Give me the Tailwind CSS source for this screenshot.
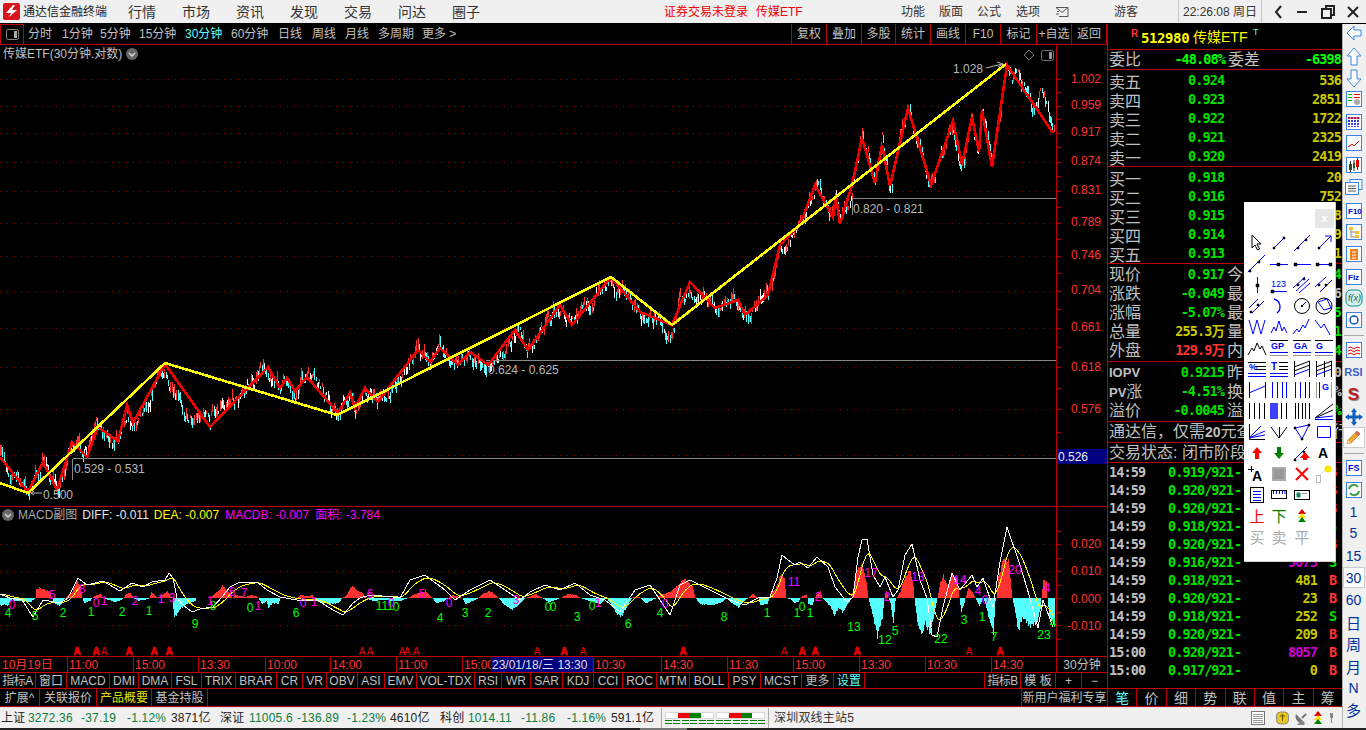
<!DOCTYPE html>
<html lang="zh">
<head>
<meta charset="UTF-8">
<title>通达信金融终端</title>
<script src="https://cdn.jsdelivr.net/npm/@tailwindcss/browser@4"></script>
</head>
<body class="w-[1366px] h-[730px] overflow-hidden bg-black flex flex-col text-[12px] leading-none text-[#c0c0c0] font-['Liberation_Sans','Noto_Sans_CJK_SC',sans-serif]">

<!-- title bar -->
<header class="h-[23px] shrink-0 bg-[#f0f0f0] flex items-center text-[#333] relative">
  <svg class="ml-[3px]" width="17" height="17" viewBox="0 0 17 17"><rect width="17" height="17" rx="2" fill="#d8141c"/><path d="M10 2 3 10h5l-2 4 8-7H9l3-5z" fill="#fff"/></svg>
  <span class="ml-[3px] w-[84px] text-[12px] text-[#222]">通达信金融终端</span>
  <nav class="ml-[21px] flex text-[14px] text-[#333]">
    <span class="w-[54px]">行情</span><span class="w-[54px]">市场</span><span class="w-[54px]">资讯</span><span class="w-[54px]">发现</span><span class="w-[54px]">交易</span><span class="w-[54px]">问达</span><span class="w-[54px]">圈子</span>
  </nav>
  <span class="ml-[158px] w-[92px] text-[#f00000]">证券交易未登录</span>
  <span class="w-[104px] text-[#f00000]">传媒ETF</span>
  <div class="ml-[41px] flex text-[#333]"><span class="w-[38px]">功能</span><span class="w-[38px]">版面</span><span class="w-[39px]">公式</span><span class="w-[31px]">选项</span></div>
  <svg class="ml-[8px]" width="16" height="12" viewBox="0 0 16 12" fill="none" stroke="#555"><path d="M1 1.500h12v9H4M1 1.500l6 5 6-5"/><path d="M1 8h3M2 5.500h2"/></svg>
  <span class="ml-[43px] w-[64px] text-[#333]">游客</span>
  <div class="h-full w-[84px] border-x border-[#c8c8c8] flex items-center justify-center text-[#333] whitespace-nowrap">22:26:08 周日</div>
  <div class="flex items-center h-full">
    <svg class="ml-[11px]" width="12" height="14" viewBox="0 0 12 14" fill="none" stroke="#222" stroke-width="2"><path d="M8 1 3 7l5 6"/></svg>
    <svg class="ml-[11px]" width="12" height="14" viewBox="0 0 12 14"><rect x="1" y="6" width="10" height="2" fill="#222"/></svg>
    <svg class="ml-[13px]" width="14" height="14" viewBox="0 0 14 14" fill="none" stroke="#222" stroke-width="2"><path d="M5 3V1h8v9h-3M1 4h9v9H1z"/></svg>
    <svg class="ml-[11px]" width="14" height="14" viewBox="0 0 14 14" fill="none" stroke="#222" stroke-width="2"><path d="m2 2 10 10M12 2 2 12"/></svg>
  </div>
</header>
<div class="h-px shrink-0 bg-black"></div>

<div class="flex h-[704px] shrink-0">
  <div class="w-[1342px] shrink-0 flex flex-col">
    <div class="flex h-[682px] shrink-0">
      <!-- chart column -->
      <div class="w-[1107px] shrink-0 flex flex-col">
        <!-- period toolbar -->
        <div class="h-[21px] shrink-0 border-b border-[#c00000] flex items-center">
          <div class="w-[24px] h-full border-x border-t border-[#c00000] flex items-center justify-center">
            <svg width="13" height="11" viewBox="0 0 13 11"><rect x=".5" y=".5" width="12" height="10" rx="2" fill="none" stroke="#888"/><rect x="8" y="2" width="3" height="7" fill="#aaa"/></svg>
          </div>
          <div class="ml-[4px] flex whitespace-nowrap">
            <span class="w-[34px]">分时</span><span class="w-[38px]">1分钟</span><span class="w-[39px]">5分钟</span><span class="w-[46px]">15分钟</span><span class="w-[46px] text-[#5fffff]">30分钟</span><span class="w-[47px]">60分钟</span><span class="w-[34px]">日线</span><span class="w-[33px]">周线</span><span class="w-[33px]">月线</span><span class="w-[44px]">多周期</span><span>更多 &gt;</span>
          </div>
          <div class="ml-auto flex h-full border-r border-[#c00000]">
            <span class="w-[35px] border-l border-[#c00000] flex items-center justify-center">复权</span>
            <span class="w-[35px] border-l border-[#c00000] flex items-center justify-center">叠加</span>
            <span class="w-[34px] border-l border-[#c00000] flex items-center justify-center">多股</span>
            <span class="w-[35px] border-l border-[#c00000] flex items-center justify-center">统计</span>
            <span class="w-[35px] border-l border-[#c00000] flex items-center justify-center">画线</span>
            <span class="w-[35px] border-l border-[#c00000] flex items-center justify-center">F10</span>
            <span class="w-[36px] border-l border-[#c00000] flex items-center justify-center">标记</span>
            <span class="w-[35px] border-l border-[#c00000] flex items-center justify-center whitespace-nowrap">+自选</span>
            <span class="w-[35px] border-l border-[#c00000] flex items-center justify-center">返回</span>
          </div>
        </div>

        <!-- main pane -->
        <div class="h-[461px] shrink-0 flex">
          <div class="w-[1056px] shrink-0 relative">
            <svg id="main" class="absolute inset-0" width="1056" height="461" viewBox="0 45 1056 461">
              <g id="mainGrid" shape-rendering="crispEdges"></g>
              <g id="bars" shape-rendering="crispEdges"></g>
              <g shape-rendering="crispEdges" stroke="#888" fill="none">
                <path d="M852.5 198.5H1056M852.500 198.500V215"/>
                <path d="M486 360.5H1056"/>
                <path d="M72.5 458.5H1056M72.500 458.500V480"/>
              </g>
              <polyline id="zigRed" fill="none" stroke="#f00000" stroke-width="2.6" shape-rendering="crispEdges"/>
              <polyline id="zigYellow" fill="none" stroke="#ffff00" stroke-width="2.6" shape-rendering="crispEdges"/>
              <g font-size="12" fill="#b8b8b8" font-family="Liberation Sans">
                <text x="853" y="213">0.820 - 0.821</text>
                <text x="488" y="374">0.624 - 0.625</text>
                <text x="74" y="473">0.529 - 0.531</text>
                <text x="43" y="499">0.500</text>
                <text x="953" y="73">1.028</text>
              </g>
              <path d="M31 493h11M31 493l3-2M31 493l3 2M986 68l16-4M997 62l6 2-5 3" stroke="#b8b8b8" fill="none"/>
            </svg>
            <div class="absolute left-[3px] top-[3px] flex items-center gap-[4px]">
              <span class="text-[#c0c0c0]">传媒ETF(30分钟.对数)</span>
              <svg width="12" height="12" viewBox="0 0 12 12"><circle cx="6" cy="6" r="6" fill="#666"/><path d="m3 5 3 3 3-3" fill="none" stroke="#ddd" stroke-width="1.400"/></svg>
            </div>
            <div class="absolute right-[2px] top-[4px] flex items-center gap-[6px]">
              <svg width="12" height="12" viewBox="0 0 12 12"><path d="M6 1 11 6 6 11 1 6z" fill="none" stroke="#777"/></svg>
              <svg width="13" height="11" viewBox="0 0 13 11"><rect x=".5" y=".5" width="12" height="10" rx="2" fill="none" stroke="#777"/><rect x="8" y="2" width="3" height="7" fill="#999"/></svg>
            </div>
          </div>
          <div class="w-[51px] border-l border-[#c00000] relative">
            <svg class="absolute inset-0" width="50" height="461" viewBox="1057 45 50 461" id="axisMain"></svg>
            <div class="absolute left-0 top-[404px] w-[50px] h-[15px] bg-[#000080] text-[#f0f0f0] flex items-center pl-[1px]">0.526</div>
          </div>
        </div>

        <!-- macd pane -->
        <div class="h-[150px] shrink-0 border-t border-[#c00000] flex">
          <div class="w-[1056px] shrink-0 relative">
            <svg id="macd" class="absolute inset-0" width="1056" height="149" viewBox="0 507 1056 149">
              <g id="macdGrid" shape-rendering="crispEdges"></g>
              <g id="hist" shape-rendering="crispEdges"></g>
              <polyline id="dea" fill="none" stroke="#ffff00" shape-rendering="crispEdges"/>
              <polyline id="diff" fill="none" stroke="#ffffff" shape-rendering="crispEdges"/>
              <g id="macdLabels" font-size="12" font-family="Liberation Sans"></g>
              <g id="marks" font-size="10" font-family="Liberation Sans" fill="#f00000"></g>
            </svg>
            <div class="absolute left-[2px] top-[2px] flex items-center whitespace-nowrap">
              <svg width="12" height="12" viewBox="0 0 12 12"><circle cx="6" cy="6" r="6" fill="#666"/><path d="m3 5 3 3 3-3" fill="none" stroke="#ddd" stroke-width="1.400"/></svg>
              <span class="ml-[4px] text-[#a8a8a8]">MACD副图</span>
              <span class="ml-[5px] text-[#e8e8e8]">DIFF: -0.011</span>
              <span class="ml-[5px] text-[#ffff00]">DEA: -0.007</span>
              <span class="ml-[6px] text-[#ff00ff]">MACDB: -0.007</span>
              <span class="ml-[6px] text-[#ff00ff]">面积: -3.784</span>
            </div>
          </div>
          <div class="w-[51px] border-l border-[#c00000] relative">
            <svg class="absolute inset-0" width="50" height="149" viewBox="1057 507 50 149" id="axisMacd"></svg>
          </div>
        </div>

        <!-- time axis -->
        <div class="h-[16px] shrink-0 border-t border-[#c00000] flex text-[#ff3232] whitespace-nowrap">
          <span class="w-[67px] pl-[2px] flex items-center">10月19日</span>
          <span class="w-[66px] border-l border-[#c00000] flex items-center pl-px">11:00</span>
          <span class="w-[65px] border-l border-[#c00000] flex items-center pl-px">15:00</span>
          <span class="w-[67px] border-l border-[#c00000] flex items-center pl-px">13:30</span>
          <span class="w-[65px] border-l border-[#c00000] flex items-center pl-px">10:00</span>
          <span class="w-[66px] border-l border-[#c00000] flex items-center pl-px">14:00</span>
          <span class="w-[66px] border-l border-[#c00000] flex items-center pl-px">11:00</span>
          <span class="w-[29px] border-l border-[#c00000] flex items-center pl-px overflow-hidden">15:00</span>
          <span class="w-[103px] bg-[#000080] text-[#e0e0e0] border-r border-[#c00000] flex items-center pl-px">23/01/18/三 13:30</span>
          <span class="w-[67px] flex items-center pl-px">10:30</span>
          <span class="w-[66px] border-l border-[#c00000] flex items-center pl-px">14:30</span>
          <span class="w-[66px] border-l border-[#c00000] flex items-center pl-px">11:30</span>
          <span class="w-[66px] border-l border-[#c00000] flex items-center pl-px">15:00</span>
          <span class="w-[66px] border-l border-[#c00000] flex items-center pl-px">13:30</span>
          <span class="w-[66px] border-l border-[#c00000] flex items-center pl-px">10:30</span>
          <span class="w-[65px] border-l border-[#c00000] flex items-center pl-px">14:30</span>
          <span class="flex-1 border-l border-[#c00000] flex items-center justify-center text-[#c0c0c0]">30分钟</span>
        </div>

        <!-- indicator tabs -->
        <div class="h-[16px] shrink-0 border-t border-[#c00000] flex whitespace-nowrap text-[#c0c0c0]">
          <span class="w-[36px] border-r border-[#c00000] flex items-center justify-center tracking-[-0.5px]">指标A</span>
          <span class="w-[31px] border-r border-[#c00000] flex items-center justify-center">窗口</span>
          <span class="w-[43px] border-r border-[#c00000] flex items-center justify-center">MACD</span>
          <span class="w-[29px] border-r border-[#c00000] flex items-center justify-center">DMI</span>
          <span class="w-[33px] border-r border-[#c00000] flex items-center justify-center">DMA</span>
          <span class="w-[30px] border-r border-[#c00000] flex items-center justify-center">FSL</span>
          <span class="w-[34px] border-r border-[#c00000] flex items-center justify-center">TRIX</span>
          <span class="w-[41px] border-r border-[#c00000] flex items-center justify-center">BRAR</span>
          <span class="w-[26px] border-r border-[#c00000] flex items-center justify-center">CR</span>
          <span class="w-[24px] border-r border-[#c00000] flex items-center justify-center">VR</span>
          <span class="w-[31px] border-r border-[#c00000] flex items-center justify-center">OBV</span>
          <span class="w-[27px] border-r border-[#c00000] flex items-center justify-center">ASI</span>
          <span class="w-[32px] border-r border-[#c00000] flex items-center justify-center">EMV</span>
          <span class="w-[58px] border-r border-[#c00000] flex items-center justify-center">VOL-TDX</span>
          <span class="w-[27px] border-r border-[#c00000] flex items-center justify-center">RSI</span>
          <span class="w-[29px] border-r border-[#c00000] flex items-center justify-center">WR</span>
          <span class="w-[32px] border-r border-[#c00000] flex items-center justify-center">SAR</span>
          <span class="w-[31px] border-r border-[#c00000] flex items-center justify-center">KDJ</span>
          <span class="w-[29px] border-r border-[#c00000] flex items-center justify-center">CCI</span>
          <span class="w-[34px] border-r border-[#c00000] flex items-center justify-center">ROC</span>
          <span class="w-[33px] border-r border-[#c00000] flex items-center justify-center">MTM</span>
          <span class="w-[39px] border-r border-[#c00000] flex items-center justify-center">BOLL</span>
          <span class="w-[32px] border-r border-[#c00000] flex items-center justify-center">PSY</span>
          <span class="w-[41px] border-r border-[#c00000] flex items-center justify-center">MCST</span>
          <span class="w-[32px] border-r border-[#c00000] flex items-center justify-center">更多</span>
          <span class="w-[31px] border-r border-[#c00000] flex items-center justify-center text-[#5fffff]">设置</span>
          <span class="w-[120px] border-r border-[#c00000]"></span>
          <span class="w-[36px] border-r border-[#c00000] flex items-center justify-center tracking-[-0.5px]">指标B</span>
          <span class="w-[35px] border-r border-[#c00000] flex items-center justify-center">模 板</span>
          <span class="w-[26px] border-r border-[#c00000] flex items-center justify-center">+</span>
          <span class="flex-1 flex items-center justify-center">−</span>
        </div>

        <!-- extension tabs -->
        <div class="h-[18px] shrink-0 border-t border-[#c00000] flex whitespace-nowrap">
          <span class="w-[40px] border-r border-[#c00000] flex items-center justify-center">扩展^</span>
          <span class="w-[57px] border-r border-[#c00000] flex items-center justify-center">关联报价</span>
          <span class="w-[55px] border-r border-[#c00000] flex items-center justify-center text-[#e0e000]">产品概要</span>
          <span class="w-[56px] border-r border-[#c00000] flex items-center justify-center">基金持股</span>
          <span class="ml-auto w-[86px] border-l border-[#c00000] flex items-center justify-center">新用户福利专享</span>
        </div>
      </div>

      <!-- quote panel -->
      <div class="w-[235px] shrink-0 border-l border-[#c00000] flex flex-col relative text-[16px]">
        <div class="h-[26px] shrink-0 border-b border-[#c00000] flex items-center relative">
          <span class="absolute left-[23px] top-[5px] text-[10px] font-bold text-[#ff3232]">R</span>
          <span class="absolute left-[33px] top-[7px] text-[14px] font-bold text-[#ffff00] font-['DejaVu_Sans_Mono','Noto_Sans_CJK_SC',monospace] tracking-[-0.4px]">512980</span>
          <span class="absolute left-[85px] top-[6px] text-[14px] text-[#ffff00] whitespace-nowrap">传媒ETF</span>
          <span class="absolute left-[145px] top-[4px] text-[9px] text-[#5fffff]">T</span>
        </div>
        <div class="h-[20px] shrink-0 border-b border-[#c00000] flex items-center pl-[1px] whitespace-nowrap">
          <span class="w-[32px] shrink-0">委比</span>
          <span class="w-[84px] shrink-0 text-right text-[#00ff00] font-bold font-['DejaVu_Sans_Mono',monospace] text-[13.5px] tracking-[-0.9px]">-48.08%</span>
          <span class="ml-[3px] w-[32px] shrink-0">委差</span>
          <span class="ml-auto pr-[1px] text-right text-[#00ff00] font-bold font-['DejaVu_Sans_Mono',monospace] text-[13.5px] tracking-[-0.9px]">-6398</span>
        </div>

        <div class="h-[97px] shrink-0 border-b border-[#c00000] pt-[1px] font-bold [&>div]:h-[19px] [&>div]:flex [&>div]:items-center [&_b]:font-normal [&_b]:w-[80px] [&_b]:pl-[1px] [&_i]:not-italic [&_i]:w-[35px] [&_i]:text-[#00e000] [&_u]:no-underline [&_u]:ml-auto [&_u]:pr-[1px] [&_u]:text-[#c8c800] font-['DejaVu_Sans_Mono','Noto_Sans_CJK_SC',monospace] text-[13.5px] tracking-[-0.9px]">
          <div><b class="text-[16px] tracking-normal font-['Noto_Sans_CJK_SC']">卖五</b><i>0.924</i><u>536</u></div>
          <div><b class="text-[16px] tracking-normal font-['Noto_Sans_CJK_SC']">卖四</b><i>0.923</i><u>2851</u></div>
          <div><b class="text-[16px] tracking-normal font-['Noto_Sans_CJK_SC']">卖三</b><i>0.922</i><u>1722</u></div>
          <div><b class="text-[16px] tracking-normal font-['Noto_Sans_CJK_SC']">卖二</b><i>0.921</i><u>2325</u></div>
          <div><b class="text-[16px] tracking-normal font-['Noto_Sans_CJK_SC']">卖一</b><i>0.920</i><u>2419</u></div>
        </div>
        <div class="h-[97px] shrink-0 border-b border-[#c00000] pt-[1px] font-bold [&>div]:h-[19px] [&>div]:flex [&>div]:items-center [&_b]:font-normal [&_b]:w-[80px] [&_b]:pl-[1px] [&_i]:not-italic [&_i]:w-[35px] [&_i]:text-[#00e000] [&_u]:no-underline [&_u]:ml-auto [&_u]:pr-[1px] [&_u]:text-[#c8c800] font-['DejaVu_Sans_Mono','Noto_Sans_CJK_SC',monospace] text-[13.5px] tracking-[-0.9px]">
          <div><b class="text-[16px] tracking-normal font-['Noto_Sans_CJK_SC']">买一</b><i>0.918</i><u>20</u></div>
          <div><b class="text-[16px] tracking-normal font-['Noto_Sans_CJK_SC']">买二</b><i>0.916</i><u>752</u></div>
          <div><b class="text-[16px] tracking-normal font-['Noto_Sans_CJK_SC']">买三</b><i>0.915</i><u>1238</u></div>
          <div><b class="text-[16px] tracking-normal font-['Noto_Sans_CJK_SC']">买四</b><i>0.914</i><u>1349</u></div>
          <div><b class="text-[16px] tracking-normal font-['Noto_Sans_CJK_SC']">买五</b><i>0.913</i><u>2101</u></div>
        </div>

        <div class="h-[98px] shrink-0 border-b border-[#c00000] pt-[1px] [&>div]:h-[19px] [&>div]:flex [&>div]:items-center [&_span]:w-[33px] [&_span]:pl-px [&_i]:not-italic [&_i]:font-bold [&_i]:w-[83px] [&_i]:text-right [&_i]:text-[13.5px] [&_i]:tracking-[-0.9px] [&_i]:font-['DejaVu_Sans_Mono','Noto_Sans_CJK_SC',monospace] [&_b]:font-normal [&_b]:ml-[3px] [&_u]:no-underline [&_u]:ml-auto [&_u]:font-bold [&_u]:text-[13.5px] [&_u]:tracking-[-0.9px] [&_u]:pr-px [&_u]:font-['DejaVu_Sans_Mono',monospace]">
          <div><span>现价</span><i class="text-[#00e000]">0.917</i><b>今开</b><u class="text-[#00e000]">0.964</u></div>
          <div><span>涨跌</span><i class="text-[#00e000]">-0.049</i><b>最高</b><u class="text-[#c0c0c0]">0.966</u></div>
          <div><span>涨幅</span><i class="text-[#00e000]">-5.07%</i><b>最低</b><u class="text-[#00e000]">0.915</u></div>
          <div><span>总量</span><i class="text-[#c8c800]">255.3万</i><b>量比</b><u class="text-[#00e000]">1.21</u></div>
          <div><span>外盘</span><i class="text-[#ff3232]">129.9万</i><b>内盘</b><u class="text-[#00e000]">125.4</u></div>
        </div>
        <div class="h-[60px] shrink-0 border-b border-[#c00000] pt-px [&>div]:h-[19px] [&>div]:flex [&>div]:items-center [&>div>span]:w-[33px] [&>div>span]:pl-px [&_i]:not-italic [&_i]:font-bold [&_i]:w-[83px] [&_i]:text-right [&_i]:text-[13.5px] [&_i]:tracking-[-0.9px] [&_i]:text-[#00e000] [&_i]:font-['DejaVu_Sans_Mono',monospace] [&_b]:font-normal [&_b]:ml-[3px] [&_u]:no-underline [&_u]:ml-auto [&_u]:font-bold [&_u]:text-[13.5px] [&_u]:tracking-[-0.9px] [&_u]:pr-px [&_u]:font-['DejaVu_Sans_Mono',monospace]">
          <div><span class="text-[13px] font-bold whitespace-nowrap">IOPV</span><i>0.9215</i><b>昨净</b><u>0.960</u></div>
          <div><span class="whitespace-nowrap"><strong class="text-[13px]">PV</strong>涨</span><i>-4.51%</i><b>换手</b><u class="text-[#c0c0c0]">3.12%</u></div>
          <div><span>溢价</span><i>-0.0045</i><b>溢率</b><u class="text-[#00e000]">-0.49%</u></div>
        </div>
        <div class="h-[21px] shrink-0 border-b border-[#c00000] flex items-center pl-[1px] whitespace-nowrap overflow-hidden">通达信，仅需<strong class="text-[14px]">20</strong>元查看港股实时行情</div>
        <div class="h-[20px] shrink-0 border-b border-[#c00000] flex items-center pl-[1px] whitespace-nowrap overflow-hidden">交易状态: 闭市阶段</div>

        <div class="flex-1 pt-px font-bold text-[13.5px] tracking-[-0.9px] font-['DejaVu_Sans_Mono',monospace] [&>div]:h-[18px] [&>div]:flex [&>div]:items-center [&>div]:pl-px [&_i]:not-italic [&_i]:w-[59px] [&_b]:w-[66px] [&_b]:text-[#00e000] [&_s]:no-underline [&_s]:w-[10px] [&_s]:text-[#00e000] [&_u]:no-underline [&_u]:w-[73px] [&_u]:text-right [&_em]:not-italic [&_em]:ml-[12px]">
          <div><i>14:59</i><b>0.919/921</b><s>-</s><u class="text-[#c8c800]">312</u><em class="text-[#ff3232]">B</em></div>
          <div><i>14:59</i><b>0.920/921</b><s>-</s><u class="text-[#c8c800]">95</u><em class="text-[#ff3232]">B</em></div>
          <div><i>14:59</i><b>0.920/921</b><s>-</s><u class="text-[#c8c800]">130</u><em class="text-[#ff3232]">B</em></div>
          <div><i>14:59</i><b>0.918/921</b><s>-</s><u class="text-[#c8c800]">88</u><em class="text-[#00e000]">S</em></div>
          <div><i>14:59</i><b>0.920/921</b><s>-</s><u class="text-[#c8c800]">41</u><em class="text-[#ff3232]">B</em></div>
          <div><i>14:59</i><b>0.916/921</b><s>-</s><u class="text-[#d000d0]">5075</u><em class="text-[#00e000]">S</em></div>
          <div><i>14:59</i><b>0.918/921</b><s>-</s><u class="text-[#c8c800]">481</u><em class="text-[#ff3232]">B</em></div>
          <div><i>14:59</i><b>0.920/921</b><s>-</s><u class="text-[#c8c800]">23</u><em class="text-[#ff3232]">B</em></div>
          <div><i>14:59</i><b>0.918/921</b><s>-</s><u class="text-[#c8c800]">252</u><em class="text-[#00e000]">S</em></div>
          <div><i>14:59</i><b>0.920/921</b><s>-</s><u class="text-[#c8c800]">209</u><em class="text-[#ff3232]">B</em></div>
          <div><i>15:00</i><b>0.920/921</b><s>-</s><u class="text-[#d000d0]">8057</u><em class="text-[#ff3232]">B</em></div>
          <div><i>15:00</i><b>0.917/921</b><s>-</s><u class="text-[#c8c800]">0</u><em class="text-[#ff3232]">B</em></div>
        </div>

        <div class="h-[18px] shrink-0 border-t border-[#c00000] flex text-[14px] [&>span]:flex-1 [&>span]:flex [&>span]:items-center [&>span]:justify-center [&>span]:border-r [&>span]:border-[#c00000]">
          <span class="text-[#5fffff]">笔</span><span>价</span><span>细</span><span>势</span><span>联</span><span>值</span><span>主</span><span class="!border-r-0">筹</span>
        </div>

        <!-- drawing tools palette -->
        <div class="absolute left-[136px] top-[178px] w-[92px] h-[360px] bg-white border-r border-b border-[#d0d0d0] shadow-sm z-10">
          <div class="flex justify-end pt-[7px] pr-[1px]"><span class="w-[19px] h-[19px] bg-[#e6e6e6] text-white text-[11px] font-bold flex items-center justify-center">x</span></div>
          <div class="mt-[5px] pl-[3px] grid grid-cols-[22px_23px_22px_22px] auto-rows-[21px] [&>svg]:w-[20px] [&>svg]:h-[20px] [&>svg]:fill-none [&>svg]:stroke-[#0000ff]">
            <svg viewBox="0 0 20 20"><path d="M5 2v13l3-3 2.500 5 2-1-2.500-5h4z" fill="#fff" stroke="#000"/></svg>
            <svg viewBox="0 0 20 20"><path d="M5 15 15 5"/><path d="M4 14h2v2H4zM14 4h2v2h-2z" fill="#000" stroke="#000" stroke-width=".5"/></svg>
            <svg viewBox="0 0 20 20"><path d="M2 18 18 2"/><path d="M5 14h2v2H5zM13 6h2v2h-2z" fill="#000" stroke="#000" stroke-width=".5"/></svg>
            <svg viewBox="0 0 20 20"><path d="M5 15 17 3M11 3h6v6"/><path d="M4 14h2v2H4z" fill="#000" stroke="#000" stroke-width=".5"/></svg>

            <svg viewBox="0 0 20 20"><path d="M1 18 18 1"/><path d="M2 16h2v2H2zM11 7h2v2h-2z" fill="#000" stroke="#000" stroke-width=".5"/></svg>
            <svg viewBox="0 0 20 20"><path d="M1 10.500h18"/><path d="M8 9h3v3H8z" fill="#000" stroke="#000" stroke-width=".5"/></svg>
            <svg viewBox="0 0 20 20"><path d="M2 10.500h17"/><path d="M2 9h3v3H2z" fill="#000" stroke="#000" stroke-width=".5"/></svg>
            <svg viewBox="0 0 20 20"><path d="M2 10.500h16"/><path d="M2 9h3v3H2zM15 9h3v3h-3z" fill="#000" stroke="#000" stroke-width=".5"/></svg>

            <svg viewBox="0 0 20 20"><path d="M10.500 2v16"/><path d="M9 9h3v3H9z" fill="#000" stroke="#000" stroke-width=".5"/></svg>
            <svg viewBox="0 0 20 20"><text x="2" y="12" font-size="9" fill="#0000ff" stroke="none">123</text><path d="M3 16.500h15"/><path d="M2 15h3v3H2z" fill="#000" stroke="#000" stroke-width=".5"/></svg>
            <svg viewBox="0 0 20 20"><path d="M1 13 13 2M4 16 17 4M7 18 18 8"/><path d="M5 9h2v2H5zM11 3h2v2h-2z" fill="#000" stroke="#000" stroke-width=".5"/></svg>
            <svg viewBox="0 0 20 20"><path d="M1 12 12 2M6 17 18 5"/><path d="M4 9h2v2H4zM11 9h2v2h-2z" fill="#000" stroke="#000" stroke-width=".5"/></svg>

            <svg viewBox="0 0 20 20"><path d="M2 12 11 3M5 17 17 5"/><path d="M3 15h2v2H3zM10 8h2v2h-2z" fill="#000" stroke="#000" stroke-width=".5"/></svg>
            <svg viewBox="0 0 20 20"><path d="M5 3a8 8 0 0 1 3 14" stroke-width="1.300"/></svg>
            <svg viewBox="0 0 20 20"><circle cx="10" cy="10" r="7.500" stroke="#000"/><path d="M10 10 14 6"/><path d="M9 9h2v2H9z" fill="#000" stroke="none"/></svg>
            <svg viewBox="0 0 20 20"><circle cx="10" cy="10" r="8" stroke="#000"/><path d="m4 6 9-3 4 9-7 2z"/></svg>

            <svg viewBox="0 0 20 20"><path d="M2 3l4 14 4-14 4 14 4-14"/></svg>
            <svg viewBox="0 0 20 20"><path d="M2 16l3-6 2 4 3-10 3 10 2-4 3 6"/></svg>
            <svg viewBox="0 0 20 20"><path d="M1 17l4-5 2 3 4-7 2 3 4-9"/></svg>
            <svg viewBox="0 0 20 20"><path d="M1 3l6 8 3-4 6 11"/></svg>

            <svg viewBox="0 0 20 20" class="!stroke-[#000]"><path d="M1 17l4-7 2 3 3-8 3 6 2-3 4 9"/></svg>
            <svg viewBox="0 0 20 20"><path d="M1 2.500h18" stroke="#000"/><text x="2" y="11" font-size="9" font-weight="bold" fill="#0000ff" stroke="none">GP</text><path d="M1 14.500h18"/><path d="M1 17.500h18" stroke="#999"/></svg>
            <svg viewBox="0 0 20 20"><path d="M1 2.500h18" stroke="#000"/><text x="2" y="11" font-size="9" font-weight="bold" fill="#0000ff" stroke="none">GA</text><path d="M1 14.500h18"/><path d="M1 17.500h18" stroke="#999"/></svg>
            <svg viewBox="0 0 20 20"><path d="M1 2.500h18" stroke="#000"/><text x="2" y="11" font-size="9" font-weight="bold" fill="#0000ff" stroke="none">G</text><path d="M1 14.500h18"/><path d="M1 17.500h18" stroke="#999"/></svg>

            <svg viewBox="0 0 20 20"><path d="M1 3.500h18M8 7.500h11M8 10.500h11" stroke="#000"/><text x="2" y="11" font-size="9" font-weight="bold" fill="#0000ff" stroke="none">%</text><path d="M1 14.500h18M1 17.500h18"/></svg>
            <svg viewBox="0 0 20 20"><path d="M10 3.500h9M10 7.500h9M10 10.500h9" stroke="#000"/><text x="2" y="11" font-size="10" font-weight="bold" fill="#0000ff" stroke="none">T</text><path d="M1 14.500h18M1 17.500h18"/></svg>
            <svg viewBox="0 0 20 20"><path d="M2.500 2v16M17.500 2v16" stroke="#000"/><path d="M2 8 18 2M2 12 18 6" stroke="#000"/><path d="M2 16 18 10"/></svg>
            <svg viewBox="0 0 20 20"><path d="M2.500 2v16M10.500 2v16M17.500 2v16" stroke="#000"/><path d="M2 8 18 2M2 12 18 6" stroke="#000"/><path d="M2 16 18 10"/></svg>

            <svg viewBox="0 0 20 20"><path d="M2.500 2v16M18.500 2v16" stroke="#000"/><path d="M2 13 18 6"/></svg>
            <svg viewBox="0 0 20 20"><path d="M3.500 2v16M8.500 2v16M13.500 2v16M17.500 2v16"/></svg>
            <svg viewBox="0 0 20 20"><path d="M3.500 2v16M8.500 2v16M17.500 2v16"/><path d="M13.500 2v16" stroke="#000"/></svg>
            <svg viewBox="0 0 20 20"><path d="M2.500 2v16M17.500 2v16" stroke="#999"/><path d="M5.500 2v16"/><text x="8" y="10" font-size="9" font-weight="bold" fill="#0000ff" stroke="none">G</text></svg>

            <svg viewBox="0 0 20 20" class="!stroke-[#000]"><path d="M2.500 2v16M7.500 2v16M12.500 2v16M17.500 2v16"/></svg>
            <svg viewBox="0 0 20 20"><path d="M2 2v16M4 2v16M6 2v16M8 2v16" stroke-width="1.500"/><path d="M12.500 2v16M17.500 2v16" stroke="#000"/></svg>
            <svg viewBox="0 0 20 20" class="!stroke-[#000]"><path d="M3.500 2v16M6.500 2v16M10.500 2v16"/><path d="M13.500 2v16" stroke="#00f"/><path d="M17.500 2v16"/></svg>
            <svg viewBox="0 0 20 20"><path d="M1 17 19 3M1 17 19 9" stroke="#000"/><path d="M1 17 19 15M1 18.500h18"/></svg>

            <svg viewBox="0 0 20 20"><path d="M2.500 2v15.500H18" stroke="#000"/><path d="M2 16 14 4M2 16 18 9M2 16l16-3"/></svg>
            <svg viewBox="0 0 20 20" class="!stroke-[#000]"><path d="M2 5l8 11 8-11M10.500 5v11"/></svg>
            <svg viewBox="0 0 20 20"><path d="M3 6 17 3 10 17z"/><path d="M2 5h2v2H2zM16 2h2v2h-2zM9 16h2v2H9z" fill="#000" stroke="#000" stroke-width=".5"/></svg>
            <svg viewBox="0 0 20 20"><path d="M3.500 4.500h13v11h-13z"/></svg>

            <svg viewBox="0 0 20 20"><path d="M10 4 5 10h3v6h4v-6h3z" fill="#ff0000" stroke="none"/></svg>
            <svg viewBox="0 0 20 20"><path d="M10 16 5 10h3V4h4v6h3z" fill="#008000" stroke="none"/></svg>
            <svg viewBox="0 0 20 20"><path d="M2 17 15 4"/><path d="M2 16h2v2H2zM11 8h2v2h-2z" fill="#000" stroke="#000" stroke-width=".5"/><path d="M13 9 8 15h3v2h4v-2h3z" fill="#ff0000" stroke="none"/></svg>
            <svg viewBox="0 0 20 20"><text x="4" y="15" font-size="14" font-weight="bold" fill="#000" stroke="none">A</text></svg>

            <svg viewBox="0 0 20 20"><path d="M1 5.500h6M4.500 2v6" stroke="#000"/><text x="5" y="17" font-size="14" font-weight="bold" fill="#000" stroke="none">A</text></svg>
            <svg viewBox="0 0 20 20"><rect x="4" y="4" width="12" height="12" fill="#999" stroke="#aaa" stroke-width="2"/></svg>
            <svg viewBox="0 0 20 20"><path d="m4 4 12 12M16 4 4 16" stroke="#ff0000" stroke-width="2"/></svg>
            <svg viewBox="0 0 20 20"><rect x="2.500" y="11.500" width="4" height="7" stroke="#bbb"/><path d="m6 11 6-6" stroke="#ddd"/><circle cx="14" cy="5" r="3.500" fill="#ffe600" stroke="none"/></svg>

            <svg viewBox="0 0 20 20"><rect x="3.500" y="2.500" width="13" height="15" stroke="#000"/><path d="M6 6.500h8M6 9.500h8M6 12.500h8M6 15.500h8"/></svg>
            <svg viewBox="0 0 20 20"><rect x="2.500" y="5.500" width="15" height="8" stroke="#000"/><path d="M4.500 6v3M7.500 6v3M10.500 6v3M13.500 6v3M16 6v3"/></svg>
            <svg viewBox="0 0 20 20"><rect x="2.500" y="5.500" width="15" height="9" stroke="#000"/><path d="M5 8h3v4H5z" stroke="#0a8a5a" fill="#0a8a5a"/><path d="M10 8.500h5" stroke="#999"/></svg>
            <span></span>

            <span class="text-[15px] text-[#f00000] flex items-center justify-center w-[20px] h-[20px]">上</span>
            <span class="text-[15px] text-[#008000] flex items-center justify-center w-[20px] h-[20px]">下</span>
            <svg viewBox="0 0 20 20"><path d="M10 3 6 8h8z" fill="#e00000" stroke="none"/><path d="M10 7 6 12h8z" fill="#ffe000" stroke="none"/><path d="M10 11 6 16h8z" fill="#008000" stroke="none"/></svg>
            <span></span>

            <span class="text-[15px] text-[#aaa] flex items-center justify-center w-[20px] h-[20px]">买</span>
            <span class="text-[15px] text-[#aaa] flex items-center justify-center w-[20px] h-[20px]">卖</span>
            <span class="text-[15px] text-[#aaa] flex items-center justify-center w-[20px] h-[20px]">平</span>
          </div>
        </div>
      </div>
    </div>

    <div class="h-px shrink-0 bg-[#c00000]"></div>
    <!-- status bar -->
    <footer class="h-[21px] shrink-0 bg-[#f0f0f0] flex items-center text-[#222] whitespace-nowrap border-t border-[#e0e0e0] tracking-[0.2px]">
      <span class="pl-px w-[28px]">上证</span><span class="w-[53px] text-[#0c7c3c]">3272.36</span><span class="w-[46px] text-[#0c7c3c]">-37.19</span><span class="w-[44px] text-[#0c7c3c]">-1.12%</span><span class="w-[49px]">3871亿</span>
      <span class="w-[29px]">深证</span><span class="w-[48px] text-[#0c7c3c]">11005.6</span><span class="w-[50px] text-[#0c7c3c]">-136.89</span><span class="w-[43px] text-[#0c7c3c]">-1.23%</span><span class="w-[50px]">4610亿</span>
      <span class="w-[28px]">科创</span><span class="w-[53px] text-[#0c7c3c]">1014.11</span><span class="w-[46px] text-[#0c7c3c]">-11.86</span><span class="w-[44px] text-[#0c7c3c]">-1.16%</span><span class="w-[50px]">591.1亿</span>
      <div class="h-full w-[108px] border-x border-[#aaa] flex justify-center gap-[2px] items-center">
        <div class="flex flex-col w-[49px] gap-[1px]">
          <div class="h-[7px] flex border border-[#d8d8d8] bg-white"><span class="flex-1"></span><span class="flex-1 bg-[#f00000]"></span><span class="flex-1 bg-[#008000]"></span><span class="flex-1"></span></div>
          <div class="h-[4px] flex justify-between"><span class="w-[7px] border-y border-[#008000]"></span><span class="w-[7px] border-y border-[#008000]"></span><span class="w-[7px] border-y border-[#008000]"></span><span class="w-[7px] border-y border-[#008000]"></span><span class="w-[7px] border-y border-[#008000]"></span><span class="w-[7px] border-y border-[#008000]"></span></div>
        </div>
        <div class="flex flex-col w-[49px] gap-[1px]">
          <div class="h-[7px] flex border border-[#d8d8d8] bg-white"><span class="flex-1"></span><span class="flex-1 bg-[#f00000]"></span><span class="flex-1 bg-[#008000]"></span><span class="flex-1"></span></div>
          <div class="h-[4px] flex justify-between"><span class="w-[7px] border-y border-[#008000]"></span><span class="w-[7px] border-y border-[#008000]"></span><span class="w-[7px] border-y border-[#008000]"></span><span class="w-[7px] border-y border-[#008000]"></span><span class="w-[7px] border-y border-[#008000]"></span><span class="w-[7px] border-y border-[#008000]"></span></div>
        </div>
      </div>
      <span class="ml-[5px] text-[#333]">深圳双线主站5</span>
      <div class="ml-auto flex items-center pr-[7px]">
        <svg width="14" height="14" viewBox="0 0 14 14"><rect x=".5" y=".5" width="13" height="13" fill="#fff" stroke="#777"/><path d="M2 3.500h10M2 5.500h10M2 7.500h10M2 9.500h10M2 11.500h10" stroke="#999"/></svg>
        <svg class="ml-[11px]" width="13" height="14" viewBox="0 0 13 14"><rect x=".5" y="1" width="12" height="12" rx="4" fill="#e8c820" stroke="#888"/><path d="M6.500 3v7M4 5h5" stroke="#665500"/></svg>
        <svg class="ml-[6px]" width="14" height="14" viewBox="0 0 14 14"><path d="M1 3a7 7 0 0 0 9 9z" fill="#777"/><path d="m7 7 4-4" stroke="#777" stroke-width="2"/><path d="M2 14h8l-3-5z" fill="#888"/></svg>
        <svg class="ml-[3px]" width="12" height="14" viewBox="0 0 12 14"><path d="M6 0 2 5h8z" fill="#e00000"/><path d="M6 4 2 9h8z" fill="#ffe000"/><path d="M6 8 2 13h8z" fill="#008000"/></svg>
        <svg class="ml-[4px]" width="7" height="14" viewBox="0 0 7 14"><rect x="2" y="2" width="3" height="5" fill="#888"/><path d="M3.500 7v5" stroke="#888"/></svg>
      </div>
    </footer>
  </div>

  <!-- right function bar -->
  <aside class="w-[24px] shrink-0 bg-[#f0f0f0] border-l border-[#b8b8b8] pr-[2px] flex flex-col items-center text-[#003399] text-[14px]">
    <svg class="h-[18px]" width="18" viewBox="0 0 18 18" fill="#fff" stroke="#3c82e6"><path d="M9 2 2 9l7 7v-4h7V6H9z"/></svg>
    <svg class="mt-[5px] h-[20px]" width="18" viewBox="0 0 18 20" fill="#fff" stroke="#3c82e6"><path d="M9 1 2 9h4v9h6V9h4z"/></svg>
    <svg class="mt-px h-[20px]" width="18" viewBox="0 0 18 20" fill="#fff" stroke="#3c82e6"><path d="M9 19 2 11h4V2h6v9h4z"/></svg>
    <svg class="mt-px h-[20px]" width="16" viewBox="0 0 16 16"><rect x=".5" y=".5" width="15" height="15" fill="#fff" stroke="#3c82e6"/><path d="M2 3.500h4M2 6.500h4M2 9.500h4" stroke="#0a0"/><path d="M8 3.500h6M8 6.500h6" stroke="#e00"/><circle cx="11" cy="11" r="3" fill="#aaa"/></svg>
    <svg class="mt-[3px] h-[20px]" width="16" viewBox="0 0 16 16"><rect x=".5" y=".5" width="15" height="15" fill="#fff" stroke="#3c82e6"/><path d="M3 3v10M6 3v10M9 3v10M12 3v10" stroke="#00c" stroke-width="1.500" stroke-dasharray="2 1"/><path d="M2 4h12" stroke="#e00"/></svg>
    <svg class="mt-px h-[20px]" width="16" viewBox="0 0 16 16"><rect x=".5" y=".5" width="15" height="15" fill="#fff" stroke="#3c82e6"/><path d="m2 12 4-3 2 2 5-5" fill="none" stroke="#e00"/></svg>
    <svg class="mt-0.5 h-[20px]" width="16" viewBox="0 0 16 16"><rect x=".5" y=".5" width="15" height="15" fill="#fff" stroke="#3c82e6"/><path d="M3 7h3v6H3zM10 3h3v7h-3z" fill="#e00"/><path d="M7 6h2v5H7z" fill="#080"/><path d="M4.500 4v11M8 3v11M11.500 1v12" stroke="#333"/></svg>
    <svg class="mt-0.5 h-[20px]" width="18" viewBox="0 0 18 16"><rect x="5" y=".5" width="12" height="10" fill="#fff" stroke="#3c82e6"/><rect x=".5" y="3.500" width="13" height="12" fill="#fff" stroke="#3c82e6"/><path d="M3 7h8M3 9.500h8M3 12h8" stroke="#555"/></svg>
    <svg class="mt-1 h-[20px]" width="16" viewBox="0 0 16 16"><rect x=".5" y=".5" width="15" height="15" fill="#fff" stroke="#3c82e6"/><text x="2" y="11" font-size="8" font-weight="bold" fill="#00c">F10</text></svg>
    <svg class="mt-px h-[20px]" width="16" viewBox="0 0 16 16"><rect x=".5" y=".5" width="15" height="15" fill="#fff" stroke="#3c82e6"/><path d="M3 3h4v3H3zM9 7h4v3H9zM9 11h4v3H9z" fill="#f0c030"/><path d="M5 6v7h4M5 8h4" fill="none" stroke="#888"/></svg>
    <svg class="mt-0.5 h-[20px]" width="16" viewBox="0 0 16 16"><rect x=".5" y=".5" width="15" height="15" fill="#fff" stroke="#3c82e6"/><path d="M4 3h8v11H4z" fill="#f08020"/><path d="M6 6h4M6 9h4M6 12h4" stroke="#fff"/></svg>
    <svg class="mt-[3px] h-[20px]" width="16" viewBox="0 0 16 16"><rect x=".5" y=".5" width="15" height="15" fill="#fff" stroke="#3c82e6"/><text x="2" y="11" font-size="8" font-weight="bold" fill="#00c">Fiz</text></svg>
    <svg class="mt-px h-[20px]" width="18" viewBox="0 0 18 18"><rect x="1" y="1" width="16" height="16" rx="5" fill="#d8f0f0" stroke="#0a8a8a"/><text x="3" y="12" font-size="9" font-style="italic" fill="#064">f(x)</text></svg>
    <svg class="mt-0.5 h-[20px]" width="16" viewBox="0 0 16 16"><rect x=".5" y=".5" width="15" height="15" fill="#fff" stroke="#3c82e6"/><circle cx="8" cy="8" r="4" fill="none" stroke="#0a50c0" stroke-width="1.500"/></svg>
    <div class="mt-[5px] h-px w-[20px] bg-[#aaa]"></div>
    <svg class="mt-1 h-[20px]" width="16" viewBox="0 0 16 16"><rect x=".5" y=".5" width="15" height="15" fill="#fff" stroke="#3c82e6"/><path d="m2 6 3-1 3 2 3-2 3 1M2 9l3-1 3 2 3-2 3 1M2 12l3-1 3 2 3-2 3 1" fill="none" stroke="#e00"/></svg>
    <span class="mt-0.5 h-[20px] flex items-center text-[11px] font-bold text-[#4060c0]">RSI</span>
    <span class="mt-0.5 h-[20px] flex items-center text-[17px] font-bold text-[#c02020] [text-shadow:1px_1px_0_#888]">S</span>
    <svg class="mt-[3px] h-[20px]" width="18" viewBox="0 0 18 18"><path d="M9 0 12 4H10.500V7.500H14V6l4 3-4 3v-1.500h-3.500V14H12l-3 4-3-4h1.500v-3.500H4V12L0 9l4-3v1.500h3.500V4H6z" fill="#1060c0"/></svg>
    <div class="h-[21px] w-[22px] bg-white border border-[#ccc] flex items-center justify-center">
      <svg width="17" height="17" viewBox="0 0 17 17"><path d="m2 15 1-4L12 2l3 3-9 9z" fill="#f0a830" stroke="#a06010" stroke-width=".6"/><path d="m2 15 1-4 3 3z" fill="#f0d0a0"/><path d="m12 2 3 3-2 2-3-3z" fill="#e06060"/></svg>
    </div>
    <div class="mt-[5px] h-px w-[20px] bg-[#aaa]"></div>
    <svg class="mt-1 h-[20px]" width="16" viewBox="0 0 16 16"><rect x=".5" y=".5" width="15" height="15" fill="#fff" stroke="#3c82e6"/><text x="2" y="11" font-size="9" font-weight="bold" fill="#00c">FS</text></svg>
    <svg class="mt-0.5 h-[20px]" width="16" viewBox="0 0 16 16"><rect x=".5" y=".5" width="15" height="15" fill="#fff" stroke="#3c82e6"/><path d="M3 7a5 5 0 0 1 9-2M13 9a5 5 0 0 1-9 2" fill="none" stroke="#40a040" stroke-width="2"/></svg>
    <span class="mt-0.5 h-[20px] flex items-center">1</span>
    <span class="mt-px h-[20px] flex items-center">5</span>
    <span class="mt-[3px] h-[20px] flex items-center">15</span>
    <span class="mt-px h-[21px] w-[22px] bg-white border border-[#ccc] flex items-center justify-center">30</span>
    <span class="mt-0.5 h-[20px] flex items-center">60</span>
    <span class="mt-[3px] h-[20px] flex items-center text-[15px]">日</span>
    <span class="mt-px h-[20px] flex items-center text-[15px]">周</span>
    <span class="mt-[3px] h-[20px] flex items-center text-[15px]">月</span>
    <span class="mt-px h-[20px] flex items-center">N</span>
    <span class="mt-0.5 h-[20px] flex items-center text-[15px]">多</span>
  </aside>
</div>
<div class="h-[2px] shrink-0 bg-[#222] flex"><span class="ml-[640px] w-[47px] bg-[#777]"></span></div>

<script>
// seeded so the picture stays the same between runs
let seed = 7;
function rnd() { seed = (seed * 16807) % 2147483647; return seed / 2147483647; }

function interp(pts, x) {
    for (let i = 1; i < pts.length; i++) {
        if (x <= pts[i][0]) {
            const a = pts[i - 1], b = pts[i];
            return a[1] + (b[1] - a[1]) * (x - a[0]) / ((b[0] - a[0]) || 1);
        }
    }
    return pts[pts.length - 1][1];
}

const red = [[0,457],[28,492],[43,462],[57,490],[72,442],[87,457],[98,427],[118,441],[127,405],[133,423],[165,364],[210,427],[268,367],[280,388],[287,378],[295,391],[307,377],[338,413],[350,393],[355,408],[365,388],[378,402],[400,373],[418,350],[430,362],[440,348],[458,365],[470,352],[488,365],[515,330],[528,350],[560,305],[572,325],[611,277],[640,312],[672,325],[690,282],[715,308],[738,300],[745,315],[768,295],[780,245],[800,225],[815,185],[833,217],[836,196],[840,224],[852,185],[862,138],[875,183],[882,145],[890,186],[908,108],[931,185],[953,121],[962,165],[972,117],[979,152],[982,110],[992,167],[1007,65],[1053,133]];
const yellow = [[0,483],[28,493],[165,363],[337,415],[611,277],[672,325],[1006,64]];
document.getElementById('zigRed').setAttribute('points', red.join(' '));
document.getElementById('zigYellow').setAttribute('points', yellow.join(' '));

// price path: follows the zigzag, apart from a few stretches where it runs away from it
const swaps = [[165,210,[[168,385],[173,402],[190,415],[205,412],[210,420]]],[210,268,[[220,400],[228,393],[240,398],[250,382],[268,370]]],[1007,1053,[[1012,85],[1018,80],[1027,95],[1033,115],[1038,100],[1042,87],[1047,100],[1050,120],[1053,132]]]];
let pricePts = red.filter(p => !swaps.some(s => p[0] > s[0] && p[0] < s[1]));
swaps.forEach(s => pricePts = pricePts.concat(s[2]));
pricePts.sort((a, b) => a[0] - b[0]);

let barsHtml = '';
let off = 0, prev = interp(pricePts, 0);
for (let x = 0; x < 1054; x += 1.2) {
    off = off * 0.72 + (rnd() - 0.5) * 13;
    const y = interp(pricePts, x) + off;
    const up = y < prev;
    const h = 3 + rnd() * 9;
    const c = rnd() < 0.2 ? '#ffffff' : (up ? '#ff3232' : '#54ffff');
    barsHtml += `<rect x="${Math.round(x)}" y="${(y - h / 2).toFixed(0)}" width="1" height="${h.toFixed(0)}" fill="${c}"/>`;
    prev = y;
}
document.getElementById('bars').innerHTML = barsHtml;

function dotted(ys, id) {
    document.getElementById(id).innerHTML = ys.map(y => `<path d="M0 ${y}.5H1056" stroke="#a00000" stroke-dasharray="1 6"/>`).join('');
}
dotted([79,106,133,162,191,223,256,291,328,367,409,455], 'mainGrid');
dotted([544,571,625], 'macdGrid');

function axis(id, x0, items, ticks) {
    let s = items.map(i => `<text x="${i[2] || 1071}" y="${i[1] + 4}" font-size="12" font-family="Liberation Sans" fill="#ff3232">${i[0]}</text>`).join('');
    s += ticks.map(y => `<path d="M${x0} ${y}.5h4" stroke="#c00000" shape-rendering="crispEdges"/>`).join('');
    document.getElementById(id).innerHTML = s;
}
axis('axisMain', 1057, [['1.002',79],['0.959',105],['0.917',132],['0.874',161],['0.831',190],['0.789',222],['0.746',255],['0.704',290],['0.661',327],['0.618',367],['0.576',409]], [79,92,106,119,133,147,162,176,191,207,223,239,256,273,291,309,328,347,367,388,409,432]);
axis('axisMacd', 1057, [['0.020',544,1071],['0.010',571,1071],['0.000',599,1071],['-0.010',626,1067]], [531,544,558,571,585,598,612,625,639]);

// histogram control points, height in px over the zero line
const hist = [[0,-7],[8,-7],[11,-2],[12,0],[14,-3],[20,-3],[30,-4],[34,-1],[35,0],[36,9],[40,10],[44,9],[48,7],[51,2],[52,0],[54,-5],[60,-8],[63,-2],[65,0],[68,3],[72,6],[76,17],[80,12],[82,0],[84,-5],[90,-3],[92,0],[96,3],[100,4],[103,0],[108,-2],[116,-4],[122,-1],[123,0],[126,4],[130,5],[133,0],[138,-3],[147,-1],[149,0],[151,6],[155,2],[157,0],[163,4],[167,7],[170,2],[172,0],[174,-20],[180,-10],[187,-6],[195,-3],[196,0],[210,0],[214,4],[218,7],[222,12],[226,8],[230,3],[232,0],[235,3],[245,1],[250,3],[256,2],[258,0],[262,-6],[266,-3],[268,-9],[272,-5],[278,-6],[280,0],[297,0],[300,3],[306,2],[312,3],[314,0],[320,-4],[330,-6],[338,-5],[342,0],[346,3],[352,12],[356,8],[362,5],[366,0],[372,-3],[385,-2],[392,-3],[400,-3],[408,0],[412,3],[425,7],[432,0],[436,-5],[444,-3],[448,0],[452,3],[462,0],[465,-6],[472,-3],[478,0],[482,4],[490,7],[498,0],[503,-6],[512,-12],[520,-5],[525,0],[535,4],[542,0],[548,-4],[555,-2],[560,0],[568,4],[575,3],[580,0],[588,-3],[600,-6],[606,0],[612,-8],[620,-20],[628,-6],[632,0],[636,2],[640,0],[645,-5],[652,-2],[656,0],[660,3],[670,6],[676,12],[684,19],[692,12],[695,0],[700,-6],[712,-7],[722,-4],[726,0],[730,-4],[738,-9],[745,-2],[748,0],[752,4],[758,0],[760,-7],[767,-6],[769,0],[770,5],[775,8],[781,25],[784,18],[786,0],[790,-1],[794,-5],[798,-4],[800,0],[802,2],[806,3],[807,0],[808,-6],[812,-7],[814,0],[818,5],[820,7],[822,0],[825,-3],[830,-8],[834,-18],[838,-10],[842,-14],[848,-5],[851,0],[853,10],[857,30],[862,33],[866,15],[868,0],[872,-15],[877,-37],[882,-20],[884,0],[886,8],[888,0],[890,-5],[893,-27],[895,-3],[896,0],[900,6],[905,22],[910,27],[913,12],[914,0],[917,-25],[922,-35],[925,-25],[930,-36],[935,-10],[937,0],[940,15],[943,22],[947,12],[952,22],[957,20],[959,0],[961,-14],[964,-5],[965,0],[968,10],[972,6],[975,0],[979,-8],[983,0],[985,-6],[990,-25],[993,-35],[995,-3],[996,0],[998,20],[1003,38],[1008,36],[1011,10],[1012,0],[1015,-15],[1018,-32],[1022,-20],[1030,-28],[1037,-25],[1040,-10],[1041,0],[1043,18],[1046,16],[1047,0],[1049,-18],[1054,-28]];
let histHtml = '';
for (let x = 0; x < 1055; x++) {
    let v = interp(hist, x);
    v = v * (0.92 + rnd() * 0.18);
    const h = Math.round(Math.abs(v));
    if (!h) continue;
    histHtml += v > 0
        ? `<rect x="${x}" y="${598 - h}" width="1" height="${h}" fill="#ff3232"/>`
        : `<rect x="${x}" y="598" width="1" height="${h}" fill="#54ffff"/>`;
}
document.getElementById('hist').innerHTML = histHtml;

const diff = [[0,594],[10,598],[22,600],[33,617],[43,600],[60,603],[68,598],[78,578],[87,585],[103,581],[120,591],[132,583],[143,587],[152,582],[165,580],[169,573],[173,578],[177,598],[183,605],[192,612],[200,609],[213,607],[222,597],[230,587],[238,583],[257,582],[267,590],[280,597],[297,600],[317,600],[333,610],[343,615],[353,603],[360,598],[370,595],[393,597],[400,598],[410,580],[425,575],[445,590],[455,600],[470,590],[490,580],[505,590],[520,600],[530,592],[545,585],[560,590],[575,583],[590,595],[605,600],[620,612],[635,590],[650,585],[660,600],[670,615],[680,585],[690,580],[710,590],[730,600],[745,605],[760,597],[770,597],[777,578],[782,555],[788,560],[795,565],[800,562],[808,568],[817,557],[828,567],[835,587],[847,602],[853,597],[858,557],[862,540],[867,539],[873,575],[880,587],[885,577],[893,597],[898,590],[905,555],[912,544],[920,580],[927,598],[932,635],[937,637],[943,607],[952,573],[960,590],[972,575],[977,587],[983,578],[993,607],[1000,562],[1007,527],[1020,565],[1030,598],[1038,628],[1043,600],[1053,627]];
document.getElementById('diff').setAttribute('points', diff.join(' '));
let ema = diff[0][1];
const deaPts = [];
for (let x = 0; x < 1055; x += 2) {
    ema += (interp(diff, x) - ema) * 0.22;
    deaPts.push([x, ema.toFixed(1)]);
}
document.getElementById('dea').setAttribute('points', deaPts.join(' '));

const labels = [
    ['#00ff00', [[4,8,613],[5,35,616],[2,63,613],[1,91,612],[2,122,612],[1,149,611],[9,195,624],[8,213,606],[0,250,608],[6,296,613],[11,382,606],[1,390,606],[0,396,607],[4,440,618],[3,465,613],[2,488,613],[0,548,607],[0,553,607],[3,577,617],[0,592,606],[6,628,624],[4,660,613],[8,724,617],[1,767,613],[1,797,613],[0,802,607],[1,810,613],[13,854,627],[12,885,640],[5,895,631],[22,941,639],[3,964,620],[1,982,617],[7,994,637],[23,1044,635],[4,1053,623]]],
    ['#ff00ff', [[0,12,605],[5,52,595],[8,82,589],[0,96,603],[1,104,601],[2,135,601],[1,161,599],[3,172,598],[1,210,601],[6,232,592],[7,244,593],[1,258,606],[0,303,603],[1,314,602],[6,370,594],[0,391,603],[5,422,594],[0,449,603],[3,516,600],[1,598,603],[0,665,604],[11,794,582],[2,818,597],[17,871,573],[2,887,597],[13,918,577],[14,960,580],[4,978,591],[0,985,600],[20,1015,570],[4,1047,588]]]
];
document.getElementById('macdLabels').innerHTML = labels.map(g => g[1].map(l =>
    `<text x="${l[1]}" y="${l[2] + 4}" text-anchor="middle" fill="${g[0]}">${l[0]}</text>`).join('')).join('');

const hollow = [104,362,370,402,407,416,537,583,784,969];
const filled = [77,96,129,154,169,564,683,802,815,857,1000];
document.getElementById('marks').innerHTML =
    hollow.map(x => `<text x="${x}" y="655" text-anchor="middle">A</text>`).join('') +
    filled.map(x => `<text x="${x}" y="655" text-anchor="middle" font-weight="bold" stroke="#f00000" stroke-width=".6">A</text>`).join('');
</script>
</body>
</html>
